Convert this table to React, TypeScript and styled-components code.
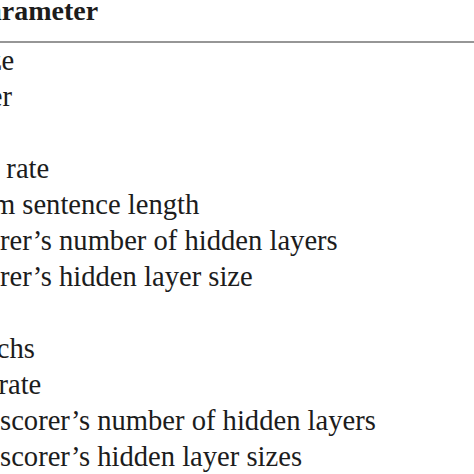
import React from 'react'
import styled, { createGlobalStyle } from 'styled-components'

const GlobalStyle = createGlobalStyle`
  html, body {
    margin: 0;
    padding: 0;
    background: #ffffff;
  }
  body {
    overflow: hidden;
  }
`

const Viewport = styled.div`
  width: 474px;
  height: 474px;
  overflow: hidden;
  background: #ffffff;
`

// the table is cropped on the left, as in the source figure
const Table = styled.table`
  margin-left: -104px;
  width: 700px;
  border-collapse: collapse;
  font-family: 'Liberation Serif', 'Times New Roman', serif;
  font-size: 28.6px;
  color: #1c1c1c;
`

const HeadCell = styled.th`
  text-align: left;
  font-weight: 700;
  font-size: 28px;
  line-height: 20px;
  padding: 1px 0 20px;
  border-bottom: 2px solid #969696;
  white-space: nowrap;
`

const Cell = styled.td`
  line-height: 36px;
  padding: 0;
  white-space: nowrap;
`

const rows = [
  'Batch size',
  'Optimizer',
  'Parser',
  'Learning rate',
  'Maximum sentence length',
  'Edge scorer’s number of hidden layers',
  'Edge scorer’s hidden layer size',
  'Labeler',
  'Max epochs',
  'Dropout rate',
  'Relation scorer’s number of hidden layers',
  'Relation scorer’s hidden layer sizes',
]

export default function App() {
  return (
    <Viewport>
      <GlobalStyle />
      <Table>
        <thead>
          <tr>
            <HeadCell>Hyperparameter</HeadCell>
          </tr>
        </thead>
        <tbody>
          {rows.map((r, i) => (
            <tr key={i}>
              <Cell>{r}</Cell>
            </tr>
          ))}
        </tbody>
      </Table>
    </Viewport>
  )
}
